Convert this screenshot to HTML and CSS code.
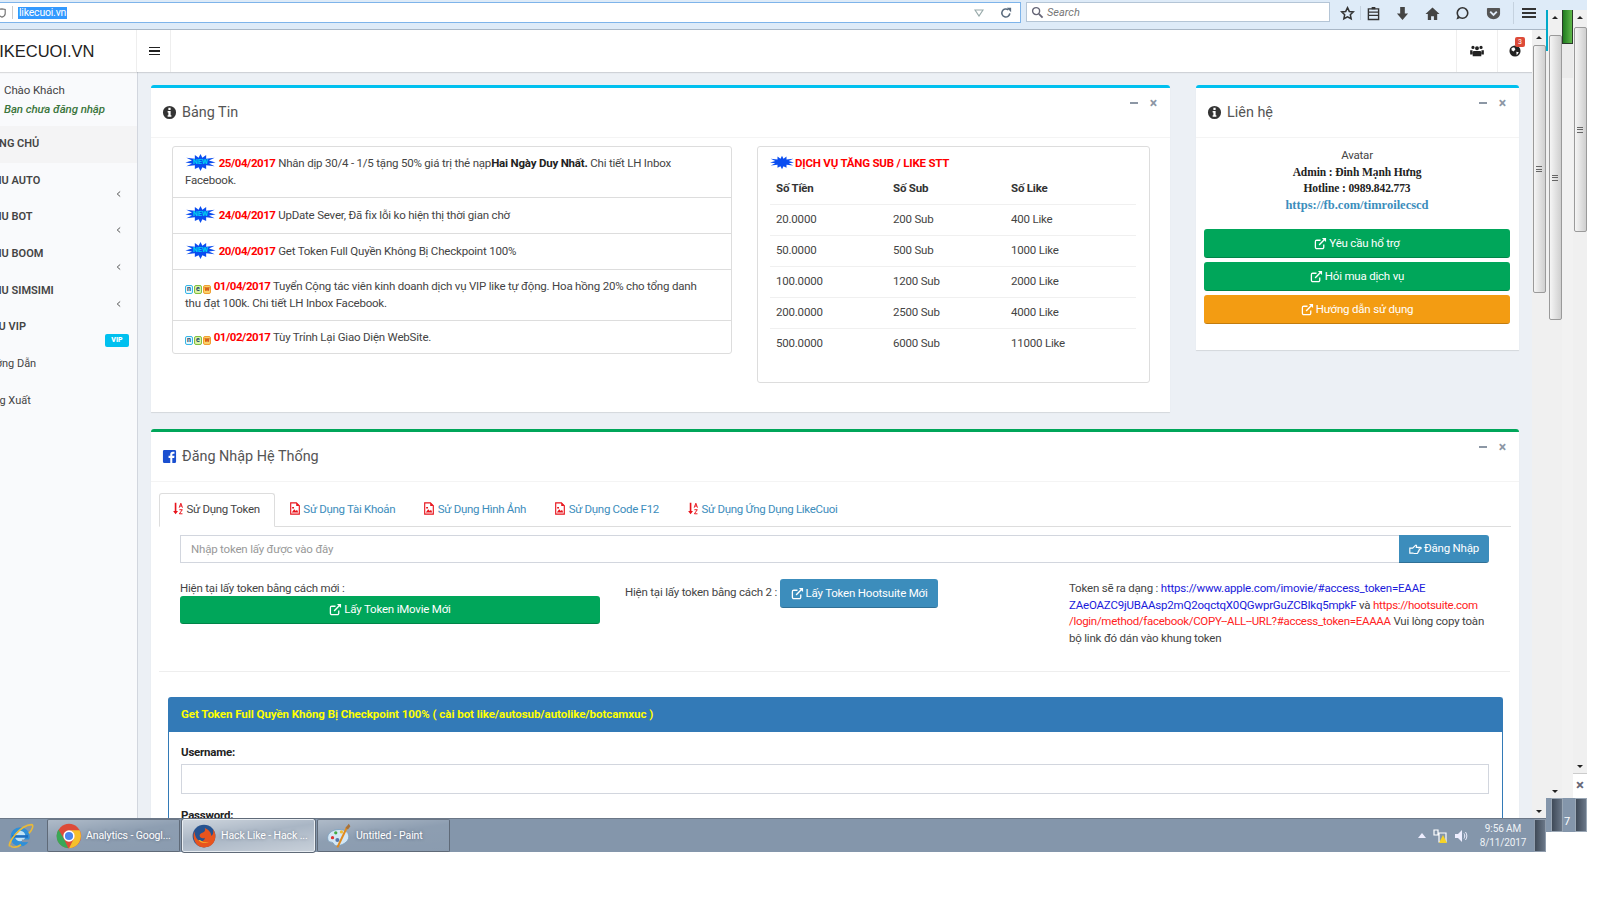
FILE: index.html
```html
<!DOCTYPE html>
<html lang="vi">
<head>
<meta charset="utf-8">
<title>LIKECUOI.VN</title>
<link rel="stylesheet" href="styles.css">
</head>
<body>
<svg class="defs" width="0" height="0" aria-hidden="true">
  <symbol id="i-info" viewBox="0 0 16 16"><path fill-rule="evenodd" d="M8 1a7 7 0 1 0 0 14A7 7 0 0 0 8 1zM6.8 3h2.400v2.200H6.800zM6 6.400h3.200V11H10v1.600H6V11h.8V8H6z"/></symbol>
  <symbol id="i-ext" viewBox="0 0 14 14"><path fill="none" stroke="currentColor" stroke-width="1.400" d="M10.500 8v3a1.500 1.500 0 0 1-1.500 1.500H3A1.500 1.500 0 0 1 1.500 11V5A1.500 1.500 0 0 1 3 3.500h4"/><path fill="none" stroke="currentColor" stroke-width="1.500" d="M5.500 8.500 12 2"/><path fill="currentColor" d="M8.500 1H13v4.500z"/></symbol>
  <symbol id="i-sort" viewBox="0 0 14 16"><path fill="#e8141c" d="M3 1h2v10h2l-3 4-3-4h2z"/><path fill="none" stroke="#e8141c" stroke-width="1.200" d="M8.500 7l2-5.500 2 5.500M9.200 5h2.600M8.700 9.500h3.600l-3.600 5h3.800"/></symbol>
  <symbol id="i-file" viewBox="0 0 14 16"><path fill="#fff" stroke="#e8141c" stroke-width="1.400" d="M1.700 1h7l3.600 3.600V15H1.700z"/><path fill="#e8141c" d="M8.500 1v4h4zM3 13l3-4 2 2 1.500-1.500L11 13zM3.500 6h2.300v2H3.500z"/></symbol>
  <symbol id="i-star" viewBox="0 0 32 18"><path fill="#0a4df0" d="M16 0l2 4 4-3 0 4 9-1-6 3 7 2-7 1 6 3-9-1 0 4-4-2-2 4-2-4-4 2 0-4-9 1 6-3-7-1 7-2-6-3 9 1 0-4 4 3z"/></symbol>
</svg>
<div class="screen">
  <div class="win">
    <header class="toolbar">
      <div class="urlbar">
        <svg class="shield" viewBox="0 0 10 12" width="8" height="12"><path fill="#fff" stroke="#777" stroke-width="1.500" d="M1 1.500 5 .8l4 .7v5C9 9 7 10.500 5 11.200 3 10.500 1 9 1 6.500z"/></svg>
        <span class="url-sep"></span>
        <span class="url-sel">likecuoi.vn</span>
        <span class="url-space"></span>
        <svg class="url-drop" viewBox="0 0 10 8" width="10" height="8"><path fill="none" stroke="#9aa" stroke-width="1.200" d="M1 1h8L5 7z"/></svg>
        <svg class="url-reload" viewBox="0 0 14 14" width="12" height="12"><path fill="none" stroke="#5a6b7d" stroke-width="1.800" d="M11.500 7.500A4.700 4.700 0 1 1 9.800 3.300"/><path fill="#5a6b7d" d="M8 1h5v5z"/></svg>
      </div>
      <div class="searchbar">
        <svg viewBox="0 0 14 14" width="13" height="13"><circle cx="5.500" cy="5.500" r="3.800" fill="#fff" stroke="#667" stroke-width="1.500"/><path stroke="#667" stroke-width="2" d="M8.500 8.500l4 4"/></svg>
        <span>Search</span>
      </div>
      <div class="tb-icons">
        <svg viewBox="0 0 16 16" width="15" height="15"><path fill="none" stroke="#333" stroke-width="1.600" d="M8 1.800l1.900 4 4.300.5-3.200 3 .9 4.300L8 11.500l-3.900 2.100.9-4.300-3.200-3 4.300-.5z"/></svg>
        <span class="tb-sep"></span>
        <svg viewBox="0 0 14 16" width="13" height="15"><path fill="none" stroke="#333" stroke-width="1.500" d="M1.500 3h11v11.500h-11zM1.500 6.500h11M1.500 10h11"/><path fill="#333" d="M5 1h4v2.500H5z"/></svg>
        <svg viewBox="0 0 14 16" width="13" height="15"><path fill="#444" d="M4.500 1h5v7H13l-6 7-6-7h3.500z"/></svg>
        <svg viewBox="0 0 16 16" width="15" height="15"><path fill="#444" d="M8 1.500 15.500 8.500H13V15H9.500v-4h-3v4H3V8.500H.5z"/></svg>
        <svg viewBox="0 0 16 16" width="15" height="15"><circle cx="8" cy="7.500" r="5.600" fill="none" stroke="#333" stroke-width="1.700"/><path fill="#333" d="M3 10l2 3-3.500 1.500z"/></svg>
        <svg viewBox="0 0 16 16" width="15" height="15"><path fill="#555" d="M2 2h12c.6 0 1 .4 1 1v5c0 3.500-3.200 6-7 6S1 11.500 1 8V3c0-.6.4-1 1-1z"/><path fill="none" stroke="#dfeaf6" stroke-width="2" d="M4.500 6 8 9.500 11.500 6"/></svg>
        <span class="tb-sep tb-sep-b"></span>
        <span class="tb-burger"><i></i><i></i><i></i></span>
      </div>
    </header>
    <div class="viewport">
      <div class="app">
        <div class="topbar">
          <div class="logo"><span>LIKECUOI.VN</span></div>
          <div class="toggle"><span class="burger"><i></i><i></i><i></i></span></div>
          <div class="top-space"></div>
          <div class="top-item">
            <svg viewBox="0 0 16 14" width="14" height="12"><path fill="#222" d="M8 1.500a2.300 2.300 0 1 1 0 4.600 2.300 2.300 0 0 1 0-4.600zM3.300 1a1.900 1.900 0 1 1 0 3.800 1.900 1.900 0 0 1 0-3.800zM12.700 1a1.900 1.900 0 1 1 0 3.800 1.900 1.900 0 0 1 0-3.800zM4.500 7h7c.8 0 1.500.7 1.500 1.500V13H3V8.500C3 7.700 3.700 7 4.500 7zM0 6h2.800v5H0zM13.200 6H16v5h-2.800z"/></svg>
          </div>
          <div class="top-item top-globe">
            <svg viewBox="0 0 14 14" width="12" height="12"><circle cx="7" cy="7" r="6.500" fill="#222"/><path fill="#fff" d="M3 3.500 6 2.500 7.500 5 5.500 7.500 3 6zM8.500 8l3 .5L9 12z"/></svg>
            <b class="notif">3</b>
          </div>
        </div>
        <div class="body-row">
          <aside class="sidebar">
            <div class="user">
              <div>Chào Khách</div>
              <em>Bạn chưa đăng nhập</em>
            </div>
            <ul class="menu">
              <li class="active"><span class="m-text m-home">TRANG CHỦ</span></li>
              <li><span class="m-text m-b">MENU AUTO</span><svg class="chev" viewBox="0 0 6 8" width="5" height="8"><path fill="none" stroke="#555" stroke-width="1.200" d="M5 1 1.500 4 5 7"/></svg></li>
              <li><span class="m-text m-b">MENU BOT</span><svg class="chev" viewBox="0 0 6 8" width="5" height="8"><path fill="none" stroke="#555" stroke-width="1.200" d="M5 1 1.500 4 5 7"/></svg></li>
              <li><span class="m-text m-b">MENU BOOM</span><svg class="chev" viewBox="0 0 6 8" width="5" height="8"><path fill="none" stroke="#555" stroke-width="1.200" d="M5 1 1.500 4 5 7"/></svg></li>
              <li><span class="m-text m-b">MENU SIMSIMI</span><svg class="chev" viewBox="0 0 6 8" width="5" height="8"><path fill="none" stroke="#555" stroke-width="1.200" d="M5 1 1.500 4 5 7"/></svg></li>
              <li><span class="m-text m-v">MENU VIP</span><b class="vip">VIP</b></li>
              <li><span class="m-text m-g">Hướng Dẫn</span></li>
              <li><span class="m-text m-x">Đăng Xuất</span></li>
            </ul>
          </aside>
          <main class="content">
            <div class="row-top">
              <section class="card card-news">
                <div class="card-head">
                  <svg class="ic-title"><use href="#i-info"/></svg>
                  <h3>Bảng Tin</h3>
                  <span class="tools"><i class="t-min"></i><b>×</b></span>
                </div>
                <div class="news-body">
                  <ul class="news">
                    <li class="n1"><span class="star"><svg width="31" height="17"><use href="#i-star"/></svg><span>NEW</span></span> <span class="date">25/04/2017</span> Nhân dịp 30/4 - 1/5 tặng 50% giá trị thẻ nạp<strong>Hai Ngày Duy Nhất.</strong> Chi tiết LH Inbox Facebook.</li>
                    <li class="n2"><span class="star"><svg width="31" height="17"><use href="#i-star"/></svg><span>NEW</span></span> <span class="date">24/04/2017</span> UpDate Sever, Đã fix lỗi ko hiện thị thời gian chờ</li>
                    <li class="n2"><span class="star"><svg width="31" height="17"><use href="#i-star"/></svg><span>NEW</span></span> <span class="date">20/04/2017</span> Get Token Full Quyền Không Bị Checkpoint 100%</li>
                    <li><span class="tiles"><i class="tn">n</i><i class="te">e</i><i class="tw">w</i></span> <span class="date">01/04/2017</span> Tuyển Cộng tác viên kinh doanh dịch vụ VIP like tự động. Hoa hồng 20% cho tổng danh thu đạt 100k. Chi tiết LH Inbox Facebook.</li>
                    <li class="n5"><span class="tiles"><i class="tn">n</i><i class="te">e</i><i class="tw">w</i></span> <span class="date">01/02/2017</span> Tùy Trỉnh Lại Giao Diện WebSite.</li>
                  </ul>
                  <div class="price">
                    <div class="price-title"><span class="star star-b"><svg width="24" height="15"><use href="#i-star"/></svg></span><strong>DỊCH VỤ TĂNG SUB / LIKE STT</strong></div>
                    <table>
                      <thead><tr><th>Số Tiền</th><th>Số Sub</th><th>Số Like</th></tr></thead>
                      <tbody>
                        <tr><td>20.0000</td><td>200 Sub</td><td>400 Like</td></tr>
                        <tr><td>50.0000</td><td>500 Sub</td><td>1000 Like</td></tr>
                        <tr><td>100.0000</td><td>1200 Sub</td><td>2000 Like</td></tr>
                        <tr><td>200.0000</td><td>2500 Sub</td><td>4000 Like</td></tr>
                        <tr><td>500.0000</td><td>6000 Sub</td><td>11000 Like</td></tr>
                      </tbody>
                    </table>
                  </div>
                </div>
              </section>
              <section class="card card-contact">
                <div class="card-head">
                  <svg class="ic-title"><use href="#i-info"/></svg>
                  <h3>Liên hệ</h3>
                  <span class="tools"><i class="t-min"></i><b>×</b></span>
                </div>
                <div class="contact-body">
                  <p>Avatar</p>
                  <p><strong>Admin : Đinh Mạnh Hưng</strong></p>
                  <p><strong>Hotline : 0989.842.773</strong></p>
                  <p class="p-link"><a class="fb" href="#">https://fb.com/timroilecscd</a></p>
                  <a class="btn btn-green btn-wide" href="#"><svg class="ic-ext"><use href="#i-ext"/></svg> Yêu cầu hổ trợ</a>
                  <a class="btn btn-green btn-wide" href="#"><svg class="ic-ext"><use href="#i-ext"/></svg> Hỏi mua dịch vụ</a>
                  <a class="btn btn-orange btn-wide" href="#"><svg class="ic-ext"><use href="#i-ext"/></svg> Hướng dẫn sử dụng</a>
                </div>
              </section>
            </div>
            <section class="card card-login">
              <div class="card-head">
                <svg class="ic-title" viewBox="0 0 16 16"><path fill="#1a4fd0" d="M2.500 1h11A1.500 1.500 0 0 1 15 2.500v11a1.500 1.500 0 0 1-1.500 1.500H11V9.500h2l.3-2.200H11V6c0-.7.3-1 1-1h1.300V3h-1.800C9.800 3 8.800 4 8.800 5.700v1.600H7v2.200h1.800V15H2.500A1.500 1.500 0 0 1 1 13.500v-11A1.500 1.500 0 0 1 2.500 1z"/></svg>
                <h3>Đăng Nhập Hệ Thống</h3>
                <span class="tools"><i class="t-min"></i><b>×</b></span>
              </div>
              <div class="tabs">
                <a class="tab active" href="#"><svg class="ic-tab"><use href="#i-sort"/></svg> Sử Dụng Token</a>
                <a class="tab" href="#"><svg class="ic-tab"><use href="#i-file"/></svg> Sử Dụng Tài Khoản</a>
                <a class="tab" href="#"><svg class="ic-tab"><use href="#i-file"/></svg> Sử Dụng Hình Ảnh</a>
                <a class="tab" href="#"><svg class="ic-tab"><use href="#i-file"/></svg> Sử Dụng Code F12</a>
                <a class="tab" href="#"><svg class="ic-tab"><use href="#i-sort"/></svg> Sử Dụng Ứng Dụng LikeCuoi</a>
              </div>
              <div class="token-line">
                <input class="token-input" type="text" placeholder="Nhập token lấy được vào đây">
                <a class="btn btn-blue btn-login" href="#"><svg class="ic-hand" viewBox="0 0 16 14" width="13" height="12"><path fill="none" stroke="#fff" stroke-width="1.400" d="M1 6h3.500L8 2.500c.6-.6 1.500 0 1.300.8L9 5h5c1.300 0 1.300 2 0 2h-1.500c.6 1 .2 1.800-.5 2 .3 1-.2 1.700-1 1.800.1 1-.5 1.700-1.500 1.700H6.500L4.500 12H1z"/></svg> Đăng Nhập</a>
              </div>
              <div class="token-cols">
                <div class="tc-left">
                  <div>Hiện tại lấy token bằng cách mới :</div>
                  <a class="btn btn-green btn-imovie" href="#"><svg class="ic-ext"><use href="#i-ext"/></svg> Lấy Token iMovie Mới</a>
                </div>
                <div class="tc-mid">
                  <span>Hiện tại lấy token bằng cách 2 :</span>
                  <a class="btn btn-blue btn-hoot" href="#"><svg class="ic-ext"><use href="#i-ext"/></svg> Lấy Token Hootsuite Mới</a>
                </div>
                <div class="tc-right">Token sẽ ra dạng : <span class="c-blue">https://www.apple.com/imovie/#access_token=EAAE<br>ZAeOAZC9jUBAAsp2mQ2oqctqX0QGwprGuZCBIkq5mpkF</span> và <span class="c-red">https://hootsuite.com<br>/login/method/facebook/COPY--ALL--URL?#access_token=EAAAA</span> Vui lòng copy toàn bộ link đó dán vào khung token</div>
              </div>
              <hr class="divider">
              <div class="panel">
                <div class="panel-head">Get Token Full Quyền Không Bị Checkpoint 100% ( cài bot like/autosub/autolike/botcamxuc )</div>
                <div class="panel-body">
                  <label>Username:</label>
                  <input class="panel-input" type="text">
                  <label class="l-pass">Password:</label>
                </div>
              </div>
            </section>
          </main>
        </div>
      </div>
      <div class="sb sb-page">
        <span class="sb-up"></span><span class="sb-thumb sb-t1"><i></i></span><span class="sb-fill"></span><span class="sb-down"></span>
      </div>
    </div>
    <footer class="taskbar">
      <div class="tk-start">
        <svg viewBox="0 0 32 32" width="28" height="28"><circle cx="15" cy="17" r="11" fill="#2f8fd8"/><circle cx="15" cy="16" r="6" fill="#bfe3f7"/><path fill="#1f6fc0" d="M6 15h18v3H6z"/><path fill="#8496ab" d="M17 20h10v3H17z"/><path fill="none" stroke="#e8b93a" stroke-width="1.800" d="M3 28C1 24 14 4 28 3c3 0 1 6-3 10M4 27c2 3 8 2 12-1"/></svg>
      </div>
      <div class="tk-btn">
        <svg viewBox="0 0 32 32" width="26" height="26"><circle cx="16" cy="16" r="15" fill="#dd4b39"/><path fill="#f6c02c" d="M16 9h13a15 15 0 0 1-13 22l6-12a7 7 0 0 0-6-10z"/><path fill="#3aa757" d="M3 8l7 12 5 11A15 15 0 0 1 3 8z"/><circle cx="16" cy="16" r="7" fill="#fff"/><circle cx="16" cy="16" r="5" fill="#4a85ed"/></svg>
        <span>Analytics - Googl...</span>
      </div>
      <div class="tk-btn tk-active">
        <svg viewBox="0 0 32 32" width="26" height="26"><circle cx="16" cy="16" r="14" fill="#26528f"/><path fill="#e8541e" d="M4 10c-3 9 2 20 12 20s14-7 14-14c0-3-1-6-3-8 1 4 0 7-2 8 0-4-3-8-8-10 1 3 0 5-3 6-3 1-4 3-3 5s4 2 6 1c0 3-3 5-6 4-4-1-6-6-7-12z"/><path fill="#f8b32a" d="M9 21c3 4 9 5 13 2-3 1-7 1-9-1-2-1-3-1-4-1z"/></svg>
        <span>Hack Like - Hack ...</span>
      </div>
      <div class="tk-btn">
        <svg viewBox="0 0 32 32" width="26" height="26"><path fill="#d4e7f5" stroke="#7aa0bf" d="M2 18c0-6 7-10 14-10s12 3 12 9-8 11-15 11c-3 0-3-3-5-4s-6 0-6-6z"/><circle cx="8" cy="18" r="2" fill="#d33"/><circle cx="12" cy="12" r="2" fill="#4a4"/><circle cx="19" cy="11" r="2" fill="#eb3"/><circle cx="14" cy="21" r="2.500" fill="#57a"/><path stroke="#e08a1e" stroke-width="2.500" d="M14 30 26 5"/><path fill="#a7723a" d="M24 6l4-5 2 3-3 4z"/></svg>
        <span>Untitled - Paint</span>
      </div>
      <div class="tk-space"></div>
      <div class="tray">
        <svg viewBox="0 0 8 5" width="8" height="5"><path fill="#eef" d="M4 0 8 5H0z"/></svg>
        <svg class="tray-net" viewBox="0 0 14 14" width="14" height="14"><path fill="none" stroke="#fff" stroke-width="1.200" d="M1 1h4v5H1zM6 4h7v9H6z"/><path fill="#f5d327" d="M10 6l4 8H6z"/></svg>
        <svg viewBox="0 0 14 14" width="14" height="14"><path fill="#eef" d="M1 5h3l4-4v12L4 9H1z"/><path fill="none" stroke="#eef" d="M10 4.500c1 1.500 1 3.500 0 5M11.500 3c1.800 2.500 1.800 5.500 0 8"/></svg>
      </div>
      <div class="clock"><div>9:56 AM</div><div>8/11/2017</div></div>
      <div class="tk-show"></div>
    </footer>
  </div>
  <div class="strip">
    <div class="strip-top"></div>
    <div class="strip-cols">
      <div class="sb sb-two">
        <span class="sb-up"></span><span class="sb-thumb sb-t2"><i></i></span><span class="sb-fill"></span><span class="sb-down"></span>
      </div>
      <div class="strip-green"></div>
      <div class="strip-last">
        <div class="sb sb-three">
          <span class="sb-up"></span><span class="sb-thumb sb-t3"><i></i></span><span class="sb-fill"></span><span class="sb-down"></span>
        </div>
        <div class="xbox">×</div>
      </div>
    </div>
    <div class="strip-task"><span class="st-btn"></span><span class="st-seven">7</span><span class="st-btn st-b2"></span></div>
  </div>
</div>
</body>
</html>
```
FILE: styles.css
```css
* { box-sizing: border-box; }
html, body { margin: 0; padding: 0; background: #fff; overflow: hidden; }
body { width: 1600px; height: 900px; font: 11.500px/17px Roboto, "Noto Sans", sans-serif; letter-spacing: -.2px; color: #333; }
.defs { display: block; height: 0; }
a { text-decoration: none; color: inherit; }
ul { list-style: none; margin: 0; padding: 0; }
p { margin: 0; }
h3 { margin: 0; font-weight: 400; }

.screen { display: flex; width: 1587px; height: 852px; }
.win { width: 1546px; height: 852px; display: flex; flex-direction: column; }

/* browser chrome */
.toolbar { height: 30px; flex: none; display: flex; align-items: flex-start; background: #deebf8; border-bottom: 1px solid #a9b7c6; padding-top: 2px; }
.urlbar { width: 1021px; height: 21px; background: #fff; border: 1px solid #7eb4ea; border-left: 0; display: flex; align-items: center; font-size: 10.500px; }
.shield { margin-left: -2px; }
.url-sep { width: 1px; height: 13px; background: #ccc; margin: 0 5px 0 6px; }
.url-sel { background: #3399ff; color: #fff; line-height: 12px; padding: 0 1px; }
.url-space { flex: 1; }
.url-drop { margin-right: 9px; }
.url-reload { margin: 0 8px 0 7px; }
.searchbar { width: 304px; height: 20px; margin-left: 5px; background: #fff; border: 1px solid #b4c5d6; display: flex; align-items: center; gap: 3px; padding-left: 4px; font-size: 11px; font-style: italic; color: #777; letter-spacing: 0; }
.tb-icons { flex: 1; display: flex; align-items: center; height: 22px; padding-left: 10px; }
.tb-icons svg { flex: none; margin-right: 15.800px; }
.tb-icons svg:first-child { margin-right: 5px; }
.tb-sep { width: 1px; height: 14px; background: #c5d2df; margin-right: 6px; }
.tb-sep-b { margin: 0 8px 0 -4px; height: 22px; }
.tb-burger { width: 14px; display: flex; flex-direction: column; gap: 2px; }
.tb-burger i { height: 2px; background: #333; }

.viewport { flex: 1; min-height: 0; display: flex; }
.app { width: 1532px; display: flex; flex-direction: column; overflow: hidden; }

/* top bar */
.topbar { height: 42px; flex: none; display: flex; background: #fff; box-shadow: 0 1px 1px rgba(0,0,0,.12); position: relative; z-index: 1; }
.logo { width: 137px; overflow: hidden; border-right: 1px solid #eee; font-size: 16.500px; line-height: 42px; color: #222; font-family: "Liberation Sans", Arial, sans-serif; letter-spacing: 0; }
.logo span { margin-left: -10px; display: inline-block; }
.toggle { width: 34px; border-right: 1px solid #eee; display: flex; align-items: center; justify-content: center; padding-left: 1px; }
.burger { width: 11px; display: flex; flex-direction: column; gap: 2px; }
.burger i { height: 1.500px; background: #222; }
.top-space { flex: 1; }
.top-item { width: 41px; border-left: 1px solid #eee; display: flex; align-items: center; justify-content: center; }
.top-item.top-globe { width: 35px; justify-content: flex-start; padding-left: 11px; position: relative; }
.notif { position: absolute; left: 17px; top: 7px; width: 10px; height: 10px; border-radius: 2px; background: #dd4b39; color: #fff; font-size: 7px; line-height: 10px; text-align: center; font-weight: 400; letter-spacing: 0; }

.body-row { flex: 1; min-height: 0; display: flex; }

/* sidebar */
.sidebar { width: 138px; flex: none; background: #f9fafc; border-right: 1px solid #d2d6de; overflow: hidden; }
.user { height: 54px; padding: 9px 0 0 4px; font-size: 11.500px; line-height: 19px; color: #444; letter-spacing: -.1px; }
.user em { display: block; color: #3c763d; font-weight: 500; font-size: 11.500px; }
.menu li { height: 36.700px; display: flex; justify-content: space-between; padding-top: 9px; position: relative; font-weight: 600; font-size: 11px; color: #444; white-space: nowrap; letter-spacing: 0; }
.menu li.active { background: #f4f4f5; }
.menu li:not(.active) .chev { position: absolute; left: 116px; top: 27px; }
.m-text { display: block; }
.m-home { margin-left: -22px; }
.m-b { margin-left: -22px; }
.m-v { margin-left: -25px; }
.m-g { margin-left: -19px; font-weight: 400; }
.m-x { margin-left: -20px; font-weight: 400; }
.vip { position: absolute; left: 105px; top: 25px; width: 24px; height: 13px; border-radius: 2px; background: #00c0ef; color: #fff; font-size: 7px; line-height: 13px; text-align: center; }

/* content */
.content { flex: 1; min-width: 0; background: #ecf0f5; padding: 13px 13px 0 13px; overflow: hidden; }
.row-top { display: flex; align-items: flex-start; gap: 26px; margin-bottom: 17px; }
.card { background: #fff; border-top: 3px solid #00c0ef; border-radius: 3px 3px 0 0; box-shadow: 0 1px 1px rgba(0,0,0,.1); }
.card-news { width: 1019px; height: 327px; }
.card-contact { width: 323px; height: 265px; }
.card-login { width: 1368px; height: 520px; border-top-color: #00a65a; overflow: hidden; }
.card-head { height: 50px; display: flex; align-items: center; padding: 0 13px 0 11px; border-bottom: 1px solid #f4f4f4; position: relative; color: #444; }
.ic-title { width: 15px; height: 15px; margin-right: 5px; flex: none; fill: #333; }
.card-head h3 { font-size: 14.400px; color: #555; letter-spacing: 0; }
.tools { margin-left: auto; align-self: flex-start; display: flex; align-items: center; gap: 12px; height: 30px; color: #8c97a5; }
.t-min { width: 8px; height: 2px; background: #8c97a5; }
.tools b { font-size: 14px; line-height: 13px; }

.news-body { display: flex; align-items: flex-start; padding: 8px 20px 0 21px; gap: 25px; }
.news { width: 560px; border: 1px solid #ddd; border-radius: 3px; flex: none; }
.news li { padding: 8px 20px 8px 12px; border-bottom: 1px solid #ddd; color: #444; }
.news li:last-child { border-bottom: 0; }
.news li.n1 { padding-top: 7px; }
.news li.n2 { padding-bottom: 9px; }
.news li.n5 { padding-bottom: 7px; }
.date { color: #f00; font-weight: 700; letter-spacing: -.45px; }
.news strong { color: #222; }
.star { display: inline-block; position: relative; width: 31px; height: 17px; vertical-align: -4px; }
.star svg { display: block; }
.star span { position: absolute; left: 8px; top: 3px; color: #00d2f0; font-size: 7px; line-height: 11px; font-weight: 700; letter-spacing: 0; }
.star-b { width: 24px; height: 15px; margin-right: 1px; vertical-align: -3px; }
.tiles { display: inline-flex; gap: 1px; vertical-align: -1px; }
.tiles i { width: 8px; height: 9px; border: 1px solid; border-radius: 2px; font-style: normal; font-size: 7px; line-height: 7px; text-align: center; font-weight: 700; color: #246; letter-spacing: 0; }
.tn { border-color: #38b6e8 !important; background: #e5f7fd; }
.te { border-color: #80c040 !important; background: #d9f2a8; }
.tw { border-color: #f0a030 !important; background: #fbd16a; color: #c40 !important; }

.price { width: 393px; height: 237px; border: 1px solid #ddd; border-radius: 3px; flex: none; padding: 8px 13px 0 12px; }
.price-title { font-size: 11.500px; color: #f00; }
.price table { border-collapse: collapse; width: 366px; table-layout: fixed; margin-top: 1px; color: #444; }
.price th, .price td { text-align: left; padding: 0 0 0 6px; height: 31px; border-bottom: 1px solid #f0f0f0; font-weight: 400; }
.price th { font-weight: 700; color: #333; }
.price th:nth-child(1) { width: 117px; }
.price th:nth-child(2) { width: 118px; }
.price tr:last-child td { border-bottom: 0; }

.contact-body { padding: 9px 9px 0 8px; text-align: center; color: #444; }
.contact-body p { height: 16.500px; line-height: 16.500px; }
.contact-body strong { color: #222; font-family: "Liberation Serif", serif; font-size: 11.500px; letter-spacing: -.1px; }
.fb { color: #3c8dbc; font-weight: 700; font-family: "Liberation Serif", serif; font-size: 12.500px; letter-spacing: 0; }
.contact-body p.p-link { margin-bottom: 16px; }
.btn { display: flex; align-items: center; justify-content: center; gap: 2px; height: 29px; border-radius: 3px; color: #fff; border-bottom: 1px solid rgba(0,0,0,.2); flex: none; }
.btn-wide { width: 306px; margin-top: 4px; }
.p-link + .btn-wide { margin-top: 0; }
.btn-green { background: #00a65a; }
.btn-orange { background: #f39c12; }
.btn-blue { background: #3c8dbc; }
.ic-ext { width: 13px; height: 13px; flex: none; color: #fff; }

/* tabs */
.tabs { display: flex; height: 36px; margin: 9px 8px 0 8px; border-bottom: 1px solid #ddd; align-items: flex-end; }
.tab { height: 34px; padding: 8px 14px 0; color: #3c8dbc; display: block; margin-bottom: -1px; white-space: nowrap; letter-spacing: -.3px; }
.tab.active { background: #fff; color: #444; border: 1px solid #ddd; border-bottom-color: #fff; border-radius: 3px 3px 0 0; padding-top: 7px; padding-left: 12px; }
.ic-tab { width: 12px; height: 13px; vertical-align: -2px; }

.token-line { display: flex; margin: 8px 30px 0 29px; }
.token-input { flex: 1; height: 28px; border: 1px solid #d2d6de; padding: 0 10px; font: inherit; letter-spacing: -.2px; border-right: 0; }
.token-input::placeholder { color: #999; }
.btn-login { width: 90px; height: 28px; border-radius: 0 3px 3px 0; }

.token-cols { display: flex; margin: 0 30px 0 29px; height: 94px; color: #444; }
.tc-left { width: 420px; padding-top: 17px; line-height: 17px; }
.btn-imovie { height: 28px; margin-top: -1px; }
.tc-mid { width: 444px; margin-left: 25px; padding-top: 16px; display: flex; align-items: flex-start; gap: 2px; white-space: nowrap; }
.tc-mid span { width: 153px; display: block; padding-top: 5px; }
.btn-hoot { width: 158px; height: 29px; }
.tc-right { flex: 1; padding-top: 17px; line-height: 16.500px; }
.c-blue { color: #1a1adb; }
.c-red { color: #f22; letter-spacing: -.3px; }
.divider { border: 0; border-top: 1px solid #eee; margin: 14px 9px 0 8px; }

.panel { margin: 25px 16px 0 17px; border: 1px solid #337ab7; border-radius: 3px 3px 0 0; border-bottom: 0; }
.panel-head { height: 34px; background: #337ab7; color: #ff0; font-weight: 700; padding: 8px 12px; letter-spacing: -.05px; }
.panel-body { padding: 12px 13px 0 12px; }
.panel-body label { display: block; font-weight: 700; color: #222; }
.panel-input { display: block; width: 100%; height: 30px; margin-top: 3px; border: 1px solid #d2d6de; }
.l-pass { margin-top: 13px; }

/* taskbar */
.taskbar { height: 34px; flex: none; display: flex; background: #8496ab; border-top: 1px solid #6b7787; position: relative; z-index: 3; color: #fff; letter-spacing: -.1px; }
.tk-start { width: 47px; display: flex; align-items: center; justify-content: center; padding-right: 6px; }
.tk-btn { width: 133px; margin-right: 2px; display: flex; align-items: center; gap: 4px; padding-left: 8px; border: 1px solid #5f6a78; border-top-color: #6b7787; border-radius: 2px; background: linear-gradient(172deg, rgba(255,255,255,.35) 0, rgba(255,255,255,.08) 45%, rgba(255,255,255,.05) 100%); font-size: 10.500px; white-space: nowrap; text-shadow: 0 0 3px rgba(40,50,70,.5); }
.tk-active { background: linear-gradient(172deg, rgba(255,255,255,.6) 0, rgba(255,255,255,.3) 45%, rgba(255,255,255,.55) 100%); border-color: #e8edf2; outline: 1px solid #5f6a78; }
.tk-space { flex: 1; }
.tray { display: flex; align-items: center; gap: 7px; margin-right: 10px; }
.clock { width: 50px; text-align: center; font-size: 10px; line-height: 14px; padding-top: 3px; color: #eef2f6; white-space: nowrap; }
.tk-show { width: 12px; margin-left: 6px; border: 1px solid #8f9cac; background: linear-gradient(90deg, #3f4a58, #6a7788); }

/* scrollbars */
.sb { width: 14px; display: flex; flex-direction: column; align-items: center; background: #f0f0f0; }
.sb-up, .sb-down { height: 0; width: 0; border: 3px solid transparent; flex: none; }
.sb-up { border-bottom-color: #222; border-top: 0; margin: 6px 0 4px; }
.sb-down { border-top-color: #222; border-bottom: 0; margin: 2px 0 5px; }
.sb-thumb { width: 13px; flex: none; border: 1px solid #9a9a9a; border-radius: 2px; background: linear-gradient(90deg, #f5f5f5, #cfcfcf); display: flex; align-items: center; justify-content: center; }
.sb-thumb i { width: 6px; height: 6px; border-top: 1px solid #666; border-bottom: 1px solid #666; background: linear-gradient(#666,#666) center/100% 1px no-repeat; }
.sb-fill { flex: 1; }
.sb-t1 { height: 248px; margin-top: 2px; }
.sb-t2 { height: 285px; margin-top: 12px; }
.sb-t3 { height: 205px; margin-top: 4px; }

.strip { width: 41px; height: 832px; display: flex; flex-direction: column; }
.strip-top { height: 10px; background: #deebf8; flex: none; }
.strip-cols { height: 788px; flex: none; display: flex; background: #f2f2f2; }
.strip-cols .sb-two { width: 16px; border-left: 2px solid #00a9c9; border-image: linear-gradient(#00a9c9 0, #00a9c9 42px, transparent 42px) 1; }
.strip-green { width: 11px; height: 34px; flex: none; border: 1px solid #2a3a2a; border-top: 0; background: linear-gradient(90deg, #1f7a1f, #5fb84a); box-shadow: 0 34px 0 #ebebeb; }
.strip-last { width: 14px; flex: none; display: flex; flex-direction: column; }
.sb-three { flex: 1; }
.xbox { height: 25px; flex: none; background: #fff; border-top: 1px solid #ccc; color: #667; text-align: center; font-size: 15px; line-height: 23px; font-weight: 700; letter-spacing: 0; }
.strip-task { height: 34px; flex: none; background: #8496ab; display: flex; color: #fff; letter-spacing: 0; }
.st-btn { width: 12px; margin-left: 5px; border: 1px solid #9aa7b5; background: linear-gradient(90deg, #3f4a58, #6a7788); }
.st-seven { width: 12px; padding-top: 15px; padding-left: 1px; font-size: 11px; }
.st-b2 { margin-left: 0; }
```
